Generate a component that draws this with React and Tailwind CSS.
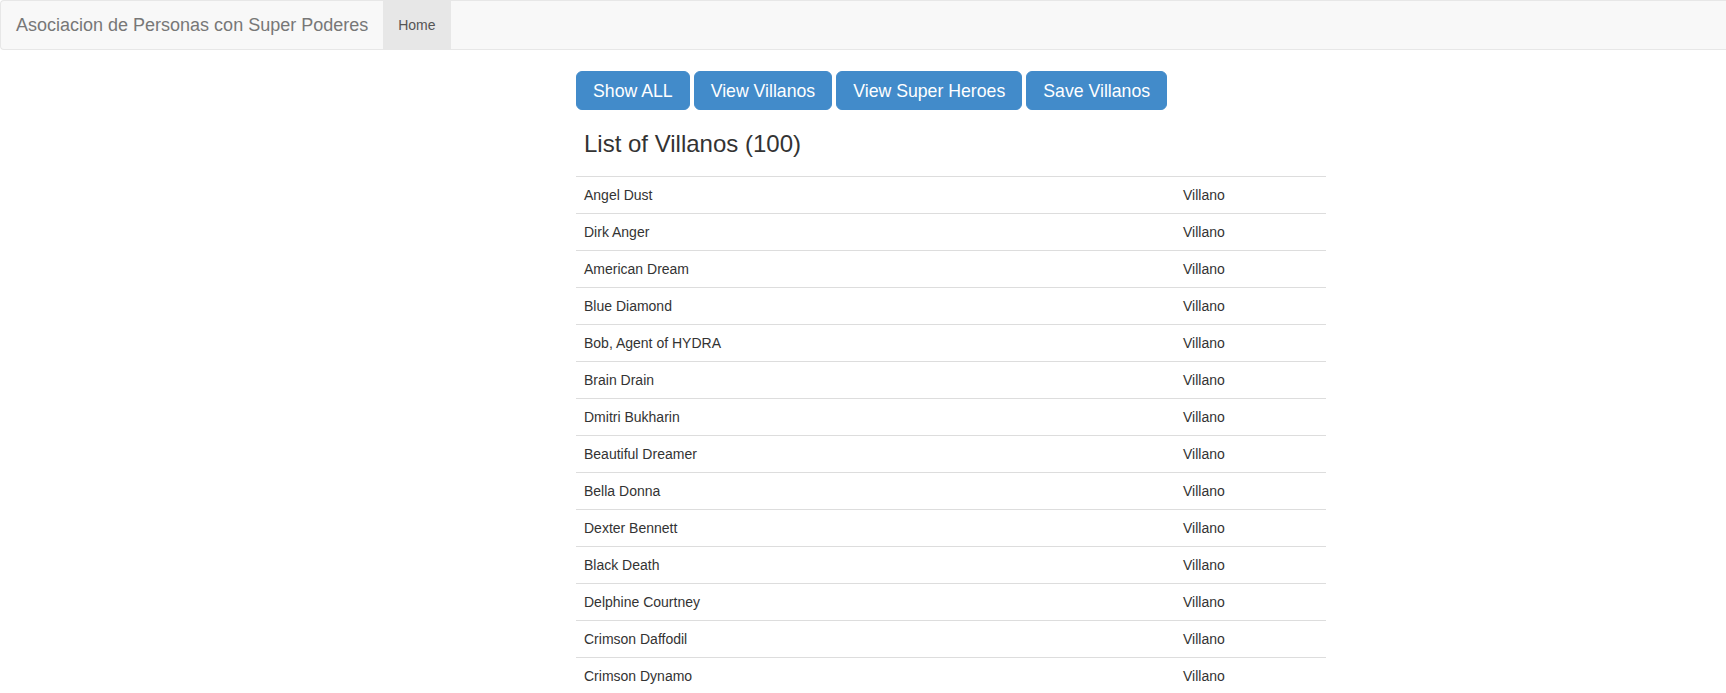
import React from "react";

const villains = [
  "Angel Dust",
  "Dirk Anger",
  "American Dream",
  "Blue Diamond",
  "Bob, Agent of HYDRA",
  "Brain Drain",
  "Dmitri Bukharin",
  "Beautiful Dreamer",
  "Bella Donna",
  "Dexter Bennett",
  "Black Death",
  "Delphine Courtney",
  "Crimson Daffodil",
  "Crimson Dynamo",
];

const buttons = ["Show ALL", "View Villanos", "View Super Heroes", "Save Villanos"];

export default function App() {
  return (
    <div className="min-h-screen bg-white text-[#333] font-['Liberation_Sans',Arial,sans-serif]">
      <nav className="flex h-[50px] items-stretch rounded-l-[4px] border-y border-l border-[#e7e7e7] bg-[#f8f8f8]">
        <div className="flex items-center pl-[15px] pr-[15px] text-[18px] leading-[20px] text-[#777]">
          Asociacion de Personas con Super Poderes
        </div>
        <div className="flex items-center bg-[#e7e7e7] px-[15px] text-[14px] leading-[20px] text-[#555]">
          Home
        </div>
      </nav>

      <div className="ml-[576px] w-[750px]">
        <div className="mt-[21px] flex gap-[4px]">
          {buttons.map((b) => (
            <button
              key={b}
              className="h-[39px] rounded-[6px] border border-[#428bca] bg-[#428bca] px-[16px] text-[17.7px] leading-[24px] text-white"
            >
              {b}
            </button>
          ))}
        </div>

        <h3 className="mb-[19px] mt-[21px] pl-[8px] text-[24px] font-normal leading-[26px] text-[#333]">
          List of Villanos (100)
        </h3>

        <div className="w-[750px]">
          {villains.map((v) => (
            <div key={v} className="flex h-[37px] border-t border-[#ddd] text-[14px] leading-[20px] text-[#333]">
              <div className="w-[599px] px-[8px] py-[8px]">{v}</div>
              <div className="flex-1 px-[8px] py-[8px]">Villano</div>
            </div>
          ))}
        </div>
      </div>
    </div>
  );
}
